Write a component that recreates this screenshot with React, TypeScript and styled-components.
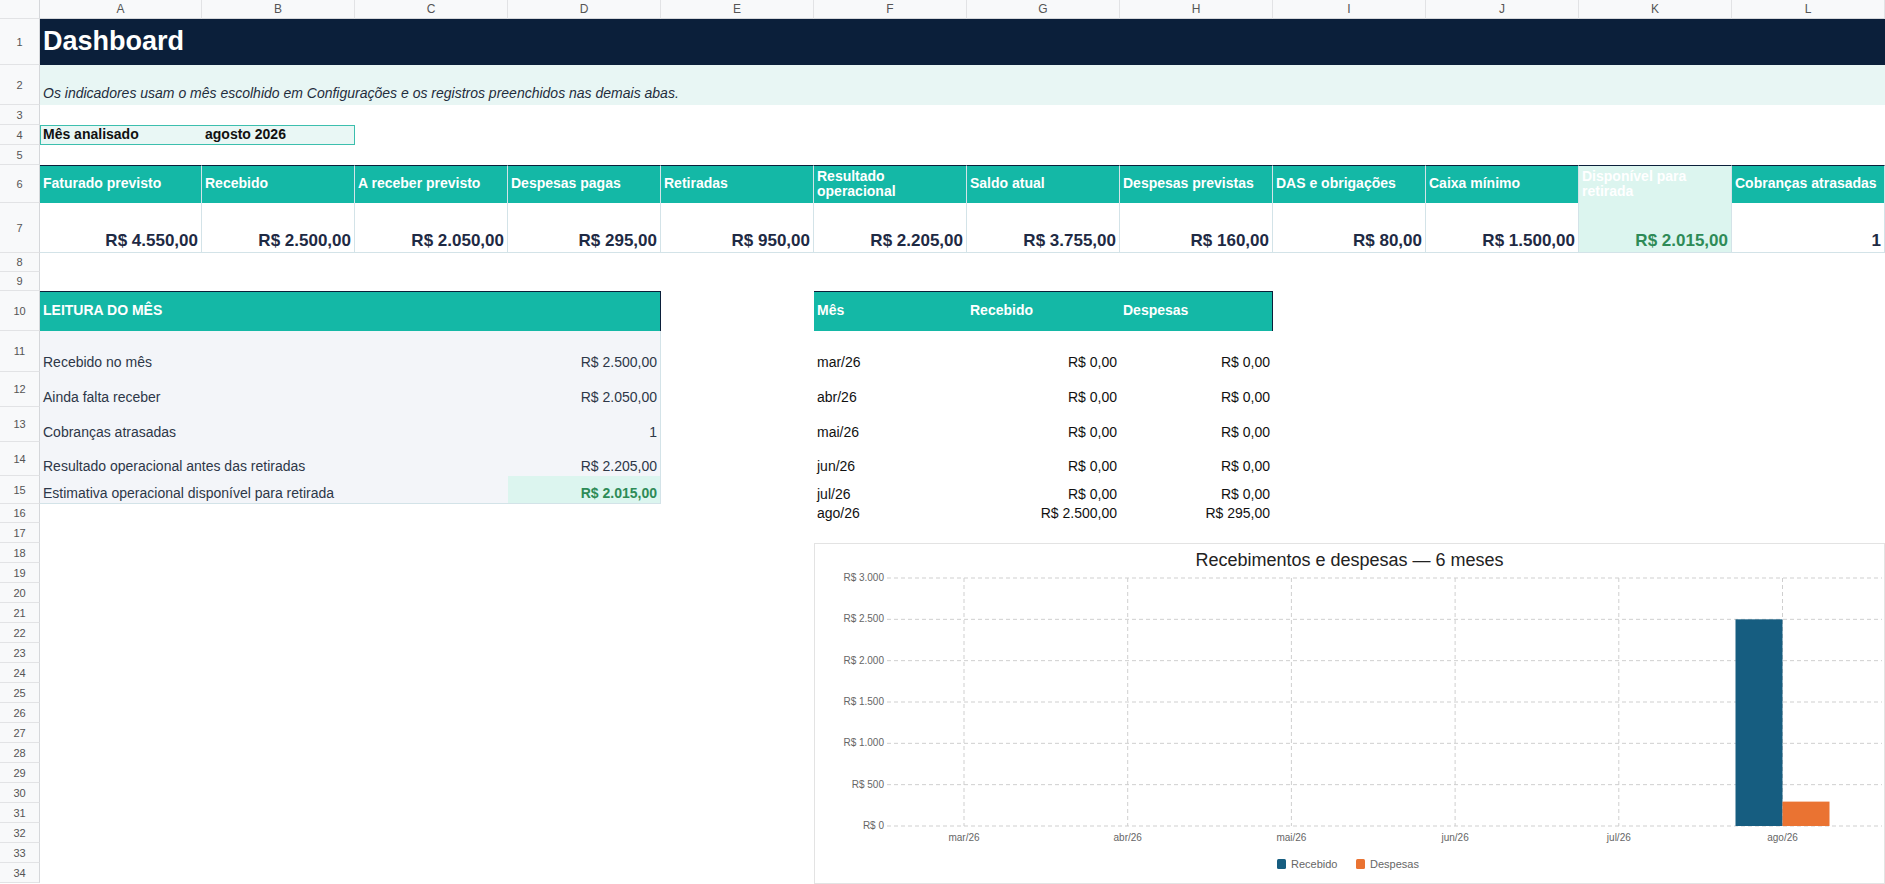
import React from "react";
import styled, { createGlobalStyle, css } from "styled-components";

const Global = createGlobalStyle`
  html, body { margin: 0; padding: 0; background: #fff; }
  body { font-family: "Liberation Sans", Arial, sans-serif; overflow: hidden; }
`;

const COLS = [40, 162, ...Array(11).fill(153)];
const ROWS = [19, 46, 40, 20, 20, 20, 38, 50, 19, 19, 40, 41, 35, 35, 34, 28, 19, ...Array(18).fill(20)];

const Sheet = styled.div`
  position: relative;
  display: grid;
  grid-template-columns: ${COLS.map((c) => c + "px").join(" ")};
  grid-template-rows: ${ROWS.map((r) => r + "px").join(" ")};
  width: 1885px;
  height: 884px;
  overflow: hidden;
`;

const ColHead = styled.div<{ $c: number }>`
  grid-row: 1;
  grid-column: ${(p) => p.$c};
  background: #f8f9fa;
  border-right: 1px solid #e2e3e5;
  border-bottom: 1px solid #d5d7da;
  font-size: 12px;
  color: #555;
  display: flex;
  align-items: center;
  justify-content: center;
`;

const RowHead = styled.div<{ $r: number }>`
  grid-column: 1;
  grid-row: ${(p) => p.$r};
  background: #f8f9fa;
  border-right: 1px solid #d5d7da;
  border-bottom: 1px solid #e2e3e5;
  font-size: 11px;
  color: #555;
  display: flex;
  align-items: center;
  justify-content: center;
`;

type CellProps = {
  $r: number;
  $c: number;
  $span?: number;
  $bg?: string;
  $color?: string;
  $size?: number;
  $bold?: boolean;
  $italic?: boolean;
  $align?: "left" | "right";
  $valign?: "center" | "flex-end";
  $border?: string;
};

const Cell = styled.div<CellProps>`
  grid-row: ${(p) => p.$r};
  grid-column: ${(p) => p.$c} / span ${(p) => p.$span ?? 1};
  background: ${(p) => p.$bg ?? "transparent"};
  color: ${(p) => p.$color ?? "#2d3748"};
  font-size: ${(p) => p.$size ?? 14}px;
  font-weight: ${(p) => (p.$bold ? 700 : 400)};
  font-style: ${(p) => (p.$italic ? "italic" : "normal")};
  display: flex;
  align-items: ${(p) => p.$valign ?? "center"};
  justify-content: ${(p) => (p.$align === "right" ? "flex-end" : "flex-start")};
  padding: 0 3px 2px;
  box-sizing: border-box;
  white-space: nowrap;
  overflow: hidden;
  line-height: 1.05;
  ${(p) => p.$border && css`border: ${p.$border};`}
`;

const Wrap = styled.span`
  white-space: normal;
`;

const ChartBox = styled.div`
  position: absolute;
  left: 814px;
  top: 543px;
  width: 1071px;
  height: 341px;
  border: 1px solid #e3e3e3;
  box-sizing: border-box;
  background: #fff;
`;

const NAVY = "#0b1f3a";
const TEAL = "#14b8a6";
const MINT = "#dcf5ef";
const INK = "#1e2a44";
const GREEN = "#2e8b57";
const ROWBG = "#f3f5f9";
const LINE = "1px solid #d3e3e8";

const kpis = [
  ["Faturado previsto", "R$ 4.550,00"],
  ["Recebido", "R$ 2.500,00"],
  ["A receber previsto", "R$ 2.050,00"],
  ["Despesas pagas", "R$ 295,00"],
  ["Retiradas", "R$ 950,00"],
  ["Resultado operacional", "R$ 2.205,00"],
  ["Saldo atual", "R$ 3.755,00"],
  ["Despesas previstas", "R$ 160,00"],
  ["DAS e obrigações", "R$ 80,00"],
  ["Caixa mínimo", "R$ 1.500,00"],
  ["Disponível para retirada", "R$ 2.015,00"],
  ["Cobranças atrasadas", "1"],
];

const leitura = [
  ["Recebido no mês", "R$ 2.500,00"],
  ["Ainda falta receber", "R$ 2.050,00"],
  ["Cobranças atrasadas", "1"],
  ["Resultado operacional antes das retiradas", "R$ 2.205,00"],
  ["Estimativa operacional disponível para retirada", "R$ 2.015,00"],
];

const meses = [
  ["mar/26", "R$ 0,00", "R$ 0,00"],
  ["abr/26", "R$ 0,00", "R$ 0,00"],
  ["mai/26", "R$ 0,00", "R$ 0,00"],
  ["jun/26", "R$ 0,00", "R$ 0,00"],
  ["jul/26", "R$ 0,00", "R$ 0,00"],
  ["ago/26", "R$ 2.500,00", "R$ 295,00"],
];

function Chart() {
  const W = 1069, H = 339;
  const left = 67, right = 1067, top = 34, bottom = 282;
  const step = 163.7, first = 149;
  const y = (v: number) => bottom - (v / 3000) * (bottom - top);
  const ticks = [0, 500, 1000, 1500, 2000, 2500, 3000];
  const labels = ["mar/26", "abr/26", "mai/26", "jun/26", "jul/26", "ago/26"];
  const fmt = (v: number) => "R$ " + (v >= 1000 ? v.toLocaleString("pt-BR") : v);
  return (
    <svg width={W} height={H} style={{ display: "block" }} fontFamily="Liberation Sans, Arial, sans-serif">
      <text x={W / 2} y={22} textAnchor="middle" fontSize="18" fill="#222">Recebimentos e despesas — 6 meses</text>
      {ticks.map((t) => (
        <g key={t}>
          <line x1={left + 5} x2={right} y1={y(t)} y2={y(t)} stroke="#cfcfcf" strokeDasharray="4 3" />
          <text x={left + 2} y={y(t) + 3} textAnchor="end" fontSize="10" fill="#666">{fmt(t)}</text>
        </g>
      ))}
      {labels.map((l, i) => {
        const cx = first + i * step;
        return (
          <g key={l}>
            <line x1={cx} x2={cx} y1={top} y2={bottom} stroke="#cfcfcf" strokeDasharray="4 3" />
            <text x={cx} y={bottom + 15} textAnchor="middle" fontSize="10" fill="#666">{l}</text>
          </g>
        );
      })}
      <rect x={first + 5 * step - 47} y={y(2500)} width={47} height={bottom - y(2500)} fill="#165d80" />
      <rect x={first + 5 * step} y={y(295)} width={47} height={bottom - y(295)} fill="#ea7332" />
      <rect x={462} y={315} width={9} height={10} rx={1.5} fill="#165d80" />
      <text x={476} y={324} fontSize="11" fill="#666">Recebido</text>
      <rect x={541} y={315} width={9} height={10} rx={1.5} fill="#ea7332" />
      <text x={555} y={324} fontSize="11" fill="#666">Despesas</text>
    </svg>
  );
}

export default function App() {
  const letters = "ABCDEFGHIJKL".split("");
  return (
    <>
      <Global />
      <Sheet>
        <RowHead $r={1} />
        {letters.map((l, i) => (
          <ColHead key={l} $c={i + 2}>{l}</ColHead>
        ))}
        {Array.from({ length: 34 }, (_, i) => (
          <RowHead key={i} $r={i + 2}>{i + 1}</RowHead>
        ))}

        <Cell $r={2} $c={2} $span={12} $bg={NAVY} $color="#fff" $size={27} $bold>Dashboard</Cell>
        <Cell $r={3} $c={2} $span={12} $bg="#e8f6f4" $color="#1f2d3d" $italic $valign="flex-end" style={{ paddingBottom: 4 }}>
          Os indicadores usam o mês escolhido em Configurações e os registros preenchidos nas demais abas.
        </Cell>
        <Cell $r={5} $c={2} $span={2} $bg="#e9f7f5" $border="1px solid #3cbfae" />
        <Cell $r={5} $c={2} $color="#111" $bold>Mês analisado</Cell>
        <Cell $r={5} $c={3} $color="#111" $bold>agosto 2026</Cell>

        {kpis.map(([h, v], i) => {
          const special = i === 10;
          return (
            <React.Fragment key={h}>
              <Cell $r={7} $c={i + 2} $bg={special ? MINT : TEAL} $color="#fff" $bold
                style={{ borderTop: `1px solid ${NAVY}`, borderRight: LINE }}>
                <Wrap>{h}</Wrap>
              </Cell>
              <Cell $r={8} $c={i + 2} $bg={special ? MINT : "#fff"} $color={special ? GREEN : INK}
                $size={17} $bold $align="right" $valign="flex-end"
                style={{ borderRight: LINE, borderBottom: LINE }}>
                {v}
              </Cell>
            </React.Fragment>
          );
        })}

        <Cell $r={11} $c={2} $span={4} $bg={TEAL} $color="#fff" $bold style={{ borderTop: `1px solid ${NAVY}`, borderRight: `1px solid ${NAVY}` }}>LEITURA DO MÊS</Cell>
        {leitura.map(([k, v], i) => {
          const last = i === 4;
          return (
            <React.Fragment key={k}>
              <Cell $r={12 + i} $c={2} $span={3} $bg={ROWBG} $valign="flex-end" style={last ? { borderBottom: LINE } : undefined}>{k}</Cell>
              <Cell $r={12 + i} $c={5} $bg={last ? MINT : ROWBG} $color={last ? GREEN : "#2d3748"} $bold={last}
                $align="right" $valign="flex-end" style={{ borderRight: LINE, ...(last ? { borderBottom: LINE } : {}) }}>{v}</Cell>
            </React.Fragment>
          );
        })}

        <Cell $r={11} $c={7} $span={3} $bg={TEAL} style={{ borderTop: `1px solid ${NAVY}`, borderRight: `1px solid ${NAVY}` }} />
        <Cell $r={11} $c={7} $color="#fff" $bold>Mês</Cell>
        <Cell $r={11} $c={8} $color="#fff" $bold>Recebido</Cell>
        <Cell $r={11} $c={9} $color="#fff" $bold>Despesas</Cell>
        {meses.map(([m, r, d], i) => (
          <React.Fragment key={m}>
            <Cell $r={12 + i} $c={7} $color="#111" $valign="flex-end">{m}</Cell>
            <Cell $r={12 + i} $c={8} $color="#111" $align="right" $valign="flex-end">{r}</Cell>
            <Cell $r={12 + i} $c={9} $color="#111" $align="right" $valign="flex-end">{d}</Cell>
          </React.Fragment>
        ))}

        <ChartBox>
          <Chart />
        </ChartBox>
      </Sheet>
    </>
  );
}
